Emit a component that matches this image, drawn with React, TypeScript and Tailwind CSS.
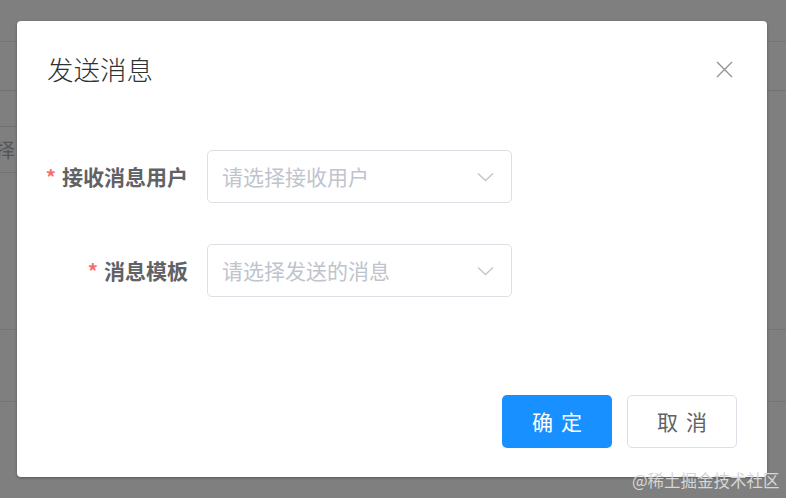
import React from "react";

const font = { fontFamily: '"Noto Sans CJK SC", "Noto Sans", sans-serif' };

function Chevron() {
  return (
    <svg width="17" height="10" viewBox="0 0 17 10" fill="none">
      <path d="M1 1.5L8.5 8.5L16 1.5" stroke="#c0c4cc" strokeWidth="1.3" />
    </svg>
  );
}

function Row({ label, placeholder }: { label: string; placeholder: string }) {
  return (
    <div className="flex items-center">
      <div className="w-[141px] flex justify-end items-center text-[21px] font-bold text-[#606266] leading-none whitespace-nowrap">
        <span className="text-[#f56c6c] mr-[6px] text-[20px]">*</span>
        <span>{label}</span>
      </div>
      <div className="ml-[19px] w-[305px] h-[53px] border border-[#dcdfe6] rounded-[5px] flex items-center justify-between pl-[14px] pr-[17px]">
        <span className="text-[21px] text-[#c0c4cc] leading-none whitespace-nowrap">{placeholder}</span>
        <Chevron />
      </div>
    </div>
  );
}

export default function App() {
  return (
    <div className="relative w-[786px] h-[498px] overflow-hidden bg-[#7f7f7f]" style={font}>
      {/* background page (dimmed) */}
      <div className="flex flex-col">
        <div className="h-[42px] border-b border-[#757575]" />
        <div className="h-[49px] border-b border-[#727272]" />
        <div className="h-[35px]" />
        <div className="h-[47px] w-[300px] border-y border-r border-[#727272] flex items-center overflow-hidden">
          <span className="ml-[-5px] text-[20px] text-[#555] leading-none">择</span>
        </div>
        <div className="h-[157px] border-b border-[#737373]" />
        <div className="h-[72px] border-b border-[#737373]" />
      </div>

      {/* dialog */}
      <div className="absolute left-[17px] top-[21px] w-[750px] h-[456px] bg-white rounded-[4px] shadow-[0_1px_3px_rgba(0,0,0,0.3)] flex flex-col">
        <div className="flex items-center justify-between pl-[30px] pr-[34px] pt-[30px] h-[67px]">
          <span className="text-[26.5px] leading-none text-[#303133] font-light whitespace-nowrap">发送消息</span>
          <svg width="17" height="17" viewBox="0 0 17 17" fill="none" className="mt-[-1px]">
            <path d="M1 1L16 16M16 1L1 16" stroke="#909399" strokeWidth="1.4" />
          </svg>
        </div>
        <div className="flex flex-col gap-[41px] pl-[30px] mt-[62px]">
          <Row label="接收消息用户" placeholder="请选择接收用户" />
          <Row label="消息模板" placeholder="请选择发送的消息" />
        </div>
        <div className="mt-auto flex justify-end gap-[15px] pr-[30px] pb-[29px]">
          <button className="w-[110px] h-[53px] rounded-[5px] bg-[#1890ff] text-white text-[21px] flex items-center justify-center gap-[8px] leading-none">
            <span>确</span>
            <span>定</span>
          </button>
          <button className="w-[110px] h-[53px] rounded-[5px] bg-white border border-[#dcdfe6] text-[#606266] text-[21px] flex items-center justify-center gap-[8px] leading-none">
            <span>取</span>
            <span>消</span>
          </button>
        </div>
      </div>

      {/* watermark */}
      <div className="absolute left-[632px] top-[472px] text-[16.5px] leading-none text-[#d6d6d6] whitespace-nowrap">
        @稀土掘金技术社区
      </div>
    </div>
  );
}
